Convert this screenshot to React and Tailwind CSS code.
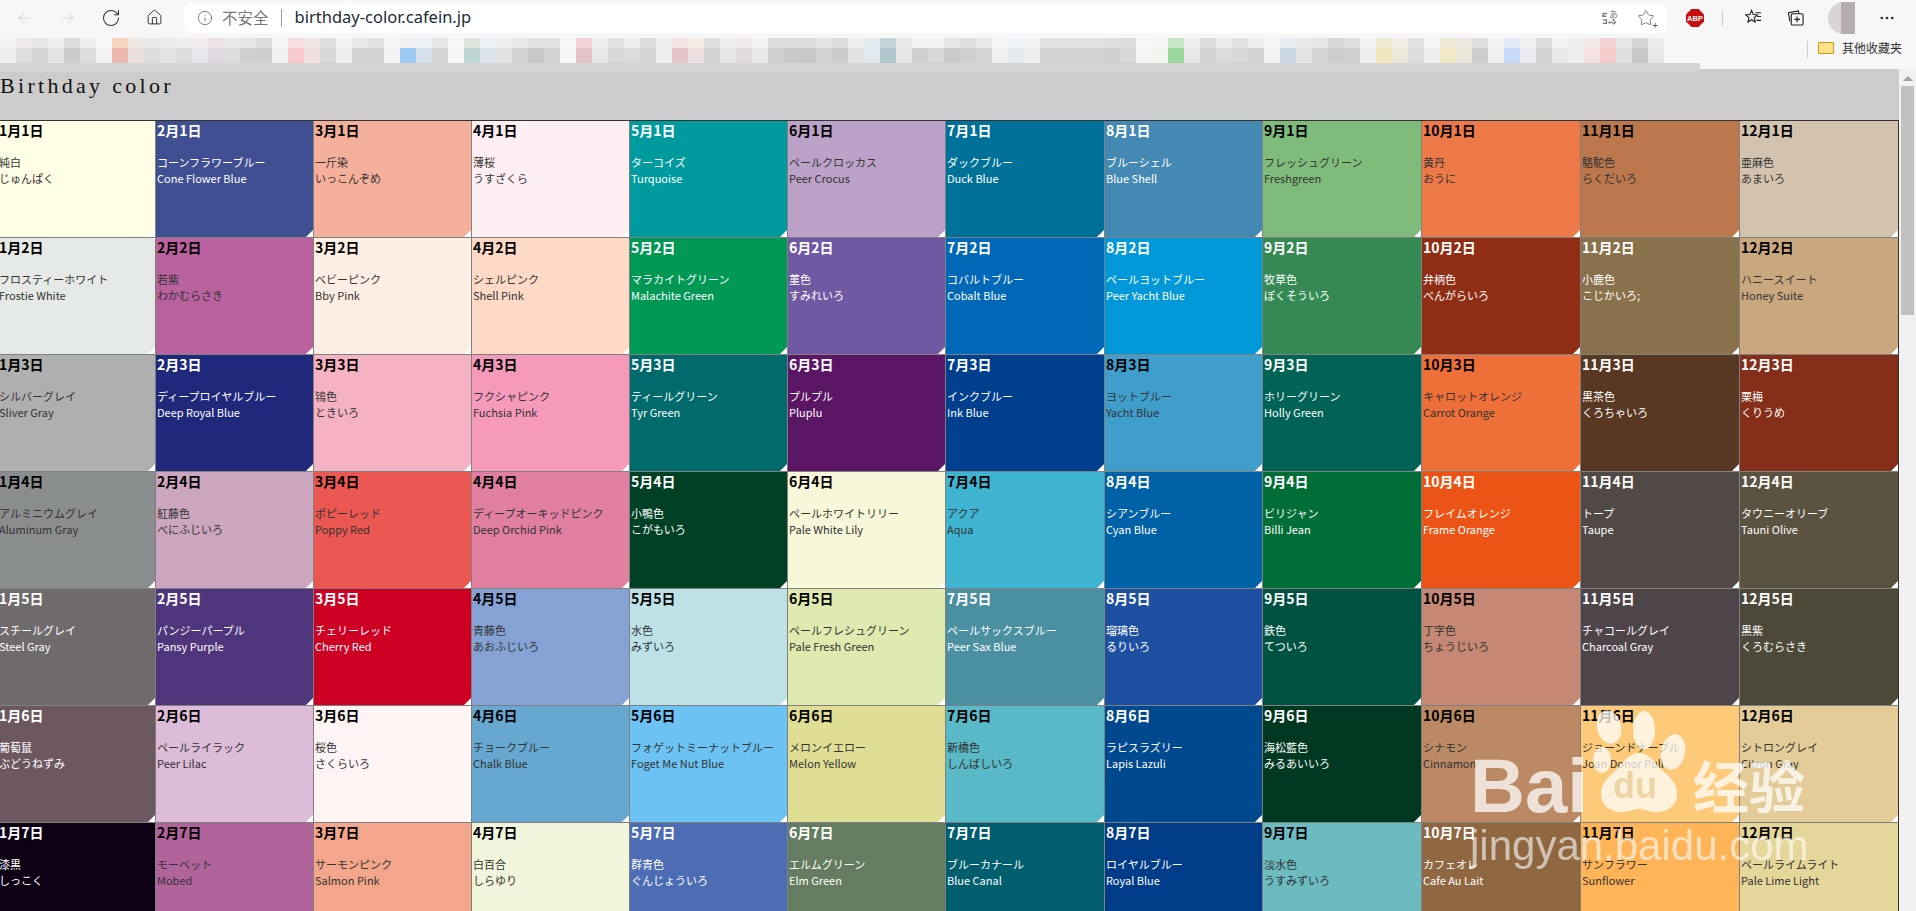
import React from 'react';
import { ArrowLeft, ArrowRight, RotateCw, Home, Info, Star, MoreHorizontal } from 'lucide-react';

const jp = "font-['Noto_Sans_CJK_JP',sans-serif]";

// one list per month: [name, second line, background, white text?]
const months = [
  [
    ['純白', 'じゅんぱく', 'bg-[#ffffe6]', false],
    ['フロスティーホワイト', 'Frostie White', 'bg-[#e6eae6]', false],
    ['シルバーグレイ', 'Sliver Gray', 'bg-[#afafb0]', false],
    ['アルミニウムグレイ', 'Aluminum Gray', 'bg-[#8a8d8d]', false],
    ['スチールグレイ', 'Steel Gray', 'bg-[#6f6a6c]', true],
    ['葡萄鼠', 'ぶどうねずみ', 'bg-[#6d5860]', true],
    ['漆黒', 'しっこく', 'bg-[#0d0015]', true],
  ],
  [
    ['コーンフラワーブルー', 'Cone Flower Blue', 'bg-[#3f4f91]', true],
    ['若紫', 'わかむらさき', 'bg-[#b9629f]', false],
    ['ディープロイヤルブルー', 'Deep Royal Blue', 'bg-[#20287c]', true],
    ['紅藤色', 'べにふじいろ', 'bg-[#cca6bf]', false],
    ['パンジーパープル', 'Pansy Purple', 'bg-[#4f357c]', true],
    ['ペールライラック', 'Peer Lilac', 'bg-[#dcbcd8]', false],
    ['モーベット', 'Mobed', 'bg-[#b0649b]', false],
  ],
  [
    ['一斤染', 'いっこんぞめ', 'bg-[#f5b09b]', false],
    ['ベビーピンク', 'Bby Pink', 'bg-[#fdeee4]', false],
    ['鴇色', 'ときいろ', 'bg-[#f5b2c2]', false],
    ['ポピーレッド', 'Poppy Red', 'bg-[#eb5751]', false],
    ['チェリーレッド', 'Cherry Red', 'bg-[#cd0024]', true],
    ['桜色', 'さくらいろ', 'bg-[#fef4f3]', false],
    ['サーモンピンク', 'Salmon Pink', 'bg-[#f3a68c]', false],
  ],
  [
    ['薄桜', 'うすざくら', 'bg-[#fdeef2]', false],
    ['シェルピンク', 'Shell Pink', 'bg-[#fdd9c6]', false],
    ['フクシャピンク', 'Fuchsia Pink', 'bg-[#f59aba]', false],
    ['ディープオーキッドピンク', 'Deep Orchid Pink', 'bg-[#e07fa0]', false],
    ['青藤色', 'あおふじいろ', 'bg-[#84a2d4]', false],
    ['チョークブルー', 'Chalk Blue', 'bg-[#66a8cf]', false],
    ['白百合', 'しらゆり', 'bg-[#f1f5dc]', false],
  ],
  [
    ['ターコイズ', 'Turquoise', 'bg-[#009b9f]', true],
    ['マラカイトグリーン', 'Malachite Green', 'bg-[#009854]', true],
    ['ティールグリーン', 'Tyr Green', 'bg-[#006a6c]', true],
    ['小鴨色', 'こがもいろ', 'bg-[#004025]', true],
    ['水色', 'みずいろ', 'bg-[#bce2e8]', false],
    ['フォゲットミーナットブルー', 'Foget Me Nut Blue', 'bg-[#6cc3f3]', false],
    ['群青色', 'ぐんじょういろ', 'bg-[#4c6cb3]', true],
  ],
  [
    ['ペールクロッカス', 'Peer Crocus', 'bg-[#bca1c9]', false],
    ['菫色', 'すみれいろ', 'bg-[#7058a3]', true],
    ['プルプル', 'Pluplu', 'bg-[#5a1665]', true],
    ['ペールホワイトリリー', 'Pale White Lily', 'bg-[#f7f7d9]', false],
    ['ペールフレシュグリーン', 'Pale Fresh Green', 'bg-[#deeab0]', false],
    ['メロンイエロー', 'Melon Yellow', 'bg-[#e0de94]', false],
    ['エルムグリーン', 'Elm Green', 'bg-[#647c5f]', true],
  ],
  [
    ['ダックブルー', 'Duck Blue', 'bg-[#007199]', true],
    ['コバルトブルー', 'Cobalt Blue', 'bg-[#0068b7]', true],
    ['インクブルー', 'Ink Blue', 'bg-[#003f8e]', true],
    ['アクア', 'Aqua', 'bg-[#3eb4d1]', false],
    ['ペールサックスブルー', 'Peer Sax Blue', 'bg-[#4a90a0]', true],
    ['新橋色', 'しんばしいろ', 'bg-[#59b9c6]', false],
    ['ブルーカナール', 'Blue Canal', 'bg-[#005e6e]', true],
  ],
  [
    ['ブルーシェル', 'Blue Shell', 'bg-[#4389b4]', true],
    ['ペールヨットブルー', 'Peer Yacht Blue', 'bg-[#0098d8]', true],
    ['ヨットブルー', 'Yacht Blue', 'bg-[#409ecc]', false],
    ['シアンブルー', 'Cyan Blue', 'bg-[#0062a6]', true],
    ['瑠璃色', 'るりいろ', 'bg-[#1e50a2]', true],
    ['ラピスラズリー', 'Lapis Lazuli', 'bg-[#00498f]', true],
    ['ロイヤルブルー', 'Royal Blue', 'bg-[#003c88]', true],
  ],
  [
    ['フレッシュグリーン', 'Freshgreen', 'bg-[#7fbc7c]', false],
    ['牧草色', 'ぼくそういろ', 'bg-[#358a54]', true],
    ['ホリーグリーン', 'Holly Green', 'bg-[#006355]', true],
    ['ビリジャン', 'Billi Jean', 'bg-[#006e36]', true],
    ['鉄色', 'てついろ', 'bg-[#005243]', true],
    ['海松藍色', 'みるあいいろ', 'bg-[#003822]', true],
    ['淡水色', 'うすみずいろ', 'bg-[#6cbbc1]', false],
  ],
  [
    ['黄丹', 'おうに', 'bg-[#ee7948]', false],
    ['弁柄色', 'べんがらいろ', 'bg-[#8f2e14]', true],
    ['キャロットオレンジ', 'Carrot Orange', 'bg-[#ee6f37]', false],
    ['フレイムオレンジ', 'Frame Orange', 'bg-[#ec5415]', true],
    ['丁字色', 'ちょうじいろ', 'bg-[#c48874]', false],
    ['シナモン', 'Cinnamon', 'bg-[#bb8a64]', false],
    ['カフェオレ', 'Cafe Au Lait', 'bg-[#8f6842]', true],
  ],
  [
    ['駱駝色', 'らくだいろ', 'bg-[#bc774d]', false],
    ['小鹿色', 'こじかいろ;', 'bg-[#89714b]', true],
    ['黒茶色', 'くろちゃいろ', 'bg-[#583822]', true],
    ['トープ', 'Taupe', 'bg-[#504946]', true],
    ['チャコールグレイ', 'Charcoal Gray', 'bg-[#4e454a]', true],
    ['ジョーンドナープル', 'Joan Donor Pull', 'bg-[#fdca79]', false],
    ['サンフラワー', 'Sunflower', 'bg-[#ffb458]', false],
  ],
  [
    ['亜麻色', 'あまいろ', 'bg-[#d3c3ae]', false],
    ['ハニースイート', 'Honey Suite', 'bg-[#c9a880]', false],
    ['栗梅', 'くりうめ', 'bg-[#852e19]', true],
    ['タウニーオリーブ', 'Tauni Olive', 'bg-[#5b5240]', true],
    ['黒紫', 'くろむらさき', 'bg-[#4d4938]', true],
    ['シトロングレイ', 'Citron Gray', 'bg-[#e3cc98]', false],
    ['ペールライムライト', 'Pale Lime Light', 'bg-[#e5d69a]', false],
  ],
];

// blurred bookmark bar: top and bottom half of each mosaic block
const mosaic = [
  ['bg-[#f4f4f4]', 'bg-[#efefef]'], ['bg-[#f0e8ea]', 'bg-[#e0dde0]'], ['bg-[#e6e6e6]', 'bg-[#d6d6d6]'], ['bg-[#eeeeee]', 'bg-[#e4e4e4]'],
  ['bg-[#dddddd]', 'bg-[#cbcbcb]'], ['bg-[#eeeeee]', 'bg-[#dddddd]'], ['bg-[#f7f7f7]', 'bg-[#f2f2f2]'], ['bg-[#f5d5c0]', 'bg-[#ecb8ae]'],
  ['bg-[#f0e8e4]', 'bg-[#eadfdc]'], ['bg-[#e9e9e9]', 'bg-[#dddddd]'], ['bg-[#ececec]', 'bg-[#e3e3e3]'], ['bg-[#eeeeee]', 'bg-[#dddddd]'],
  ['bg-[#f3ecec]', 'bg-[#e8e6ec]'], ['bg-[#efe2e6]', 'bg-[#dfd9e0]'], ['bg-[#e9e9e9]', 'bg-[#dddddd]'], ['bg-[#e6e6e6]', 'bg-[#cfcfcf]'],
  ['bg-[#dddddd]', 'bg-[#cecece]'], ['bg-[#f5f5f5]', 'bg-[#f1f1f1]'], ['bg-[#f7dfe0]', 'bg-[#f7c8cc]'], ['bg-[#f3e6e6]', 'bg-[#f0e0e0]'],
  ['bg-[#e0e0e0]', 'bg-[#d8d8d8]'], ['bg-[#f2f2f2]', 'bg-[#eeeeee]'], ['bg-[#e8e8e8]', 'bg-[#d2d2d2]'], ['bg-[#e2e2e2]', 'bg-[#d2d2d2]'],
  ['bg-[#f5f5f5]', 'bg-[#f3f3f3]'], ['bg-[#f0f0f0]', 'bg-[#9ccaf3]'], ['bg-[#eef1f4]', 'bg-[#d6e1ec]'], ['bg-[#e6e6e6]', 'bg-[#d6d6d6]'],
  ['bg-[#f7f7f7]', 'bg-[#f6f6f6]'], ['bg-[#dce6dc]', 'bg-[#bed6d3]'], ['bg-[#eef2f5]', 'bg-[#dbe4ec]'], ['bg-[#eeeeee]', 'bg-[#e2e2e2]'],
  ['bg-[#e8e8e8]', 'bg-[#d2d2d2]'], ['bg-[#e2e2e2]', 'bg-[#c8c8c8]'], ['bg-[#e2e2e2]', 'bg-[#d2d2d2]'], ['bg-[#f7f7f7]', 'bg-[#f6f6f6]'],
  ['bg-[#f2d4d6]', 'bg-[#e3c1c4]'], ['bg-[#efefef]', 'bg-[#e8e8e8]'], ['bg-[#e2e2e2]', 'bg-[#d8d8d8]'], ['bg-[#eeeeee]', 'bg-[#dcdcdc]'],
  ['bg-[#dddddd]', 'bg-[#d6d6d6]'], ['bg-[#eeeeee]', 'bg-[#eeeeee]'], ['bg-[#f3e4e4]', 'bg-[#e4c4c8]'], ['bg-[#f5ece2]', 'bg-[#efdfe0]'],
  ['bg-[#e0e0e0]', 'bg-[#d2d2d2]'], ['bg-[#efefef]', 'bg-[#e6e6e6]'], ['bg-[#efeaeb]', 'bg-[#e0dbdc]'], ['bg-[#f2f2f2]', 'bg-[#e9e9e9]'],
  ['bg-[#dcdcdc]', 'bg-[#d0d0d0]'], ['bg-[#dddddd]', 'bg-[#c9c9c9]'], ['bg-[#dddddd]', 'bg-[#c8c8c8]'], ['bg-[#e3e3e3]', 'bg-[#d2d2d2]'],
  ['bg-[#dddddd]', 'bg-[#cbcbcb]'], ['bg-[#eeeeee]', 'bg-[#e2e2e2]'], ['bg-[#e3ecf0]', 'bg-[#e0e9ef]'], ['bg-[#c2d4da]', 'bg-[#aec6cc]'],
  ['bg-[#e8e8e8]', 'bg-[#e6e6e6]'], ['bg-[#f3f3f3]', 'bg-[#cfcfcf]'], ['bg-[#f3f3f3]', 'bg-[#d8d8d8]'], ['bg-[#e6e6e6]', 'bg-[#cacaca]'],
  ['bg-[#e0e0e0]', 'bg-[#cfcfcf]'], ['bg-[#e8e8e8]', 'bg-[#d6d6d6]'], ['bg-[#f5f5f5]', 'bg-[#f0f0f0]'], ['bg-[#f1f5f7]', 'bg-[#e4ecef]'],
  ['bg-[#f2f2f2]', 'bg-[#efefef]'], ['bg-[#e2e2e2]', 'bg-[#d2d2d2]'], ['bg-[#e2e2e2]', 'bg-[#d2d2d2]'], ['bg-[#e2e2e2]', 'bg-[#d2d2d2]'],
  ['bg-[#e2e2e2]', 'bg-[#d2d2d2]'], ['bg-[#e0e0e0]', 'bg-[#d0d0d0]'], ['bg-[#dddddd]', 'bg-[#d8d8d8]'],
  ['bg-[#f7f7f7]', 'bg-[#f5f5f5]'], ['bg-[#f6f7f4]', 'bg-[#f3f5f1]'], ['bg-[#c6e6c6]', 'bg-[#9bd89a]'], ['bg-[#eeeeee]', 'bg-[#e8e8e8]'],
  ['bg-[#dddddd]', 'bg-[#d2d2d2]'], ['bg-[#ececec]', 'bg-[#dcdcdc]'], ['bg-[#e2e2e2]', 'bg-[#d8d8d8]'], ['bg-[#efefef]', 'bg-[#d2d2d2]'], ['bg-[#f5f5f5]', 'bg-[#f2f2f2]'],
  ['bg-[#e6ecf2]', 'bg-[#c9d6e4]'], ['bg-[#eaeaea]', 'bg-[#e4e4e4]'], ['bg-[#e6e6e6]', 'bg-[#d4d4d4]'], ['bg-[#d8d8d8]', 'bg-[#cdcdcd]'],
  ['bg-[#e0e0e0]', 'bg-[#d0d0d0]'], ['bg-[#f2f2f2]', 'bg-[#eeeeee]'], ['bg-[#f0e8d0]', 'bg-[#f2e6bf]'], ['bg-[#f0ede4]', 'bg-[#ece9da]'],
  ['bg-[#e2e2e2]', 'bg-[#dddddd]'], ['bg-[#f5f5f5]', 'bg-[#eeeeee]'], ['bg-[#f0e9d2]', 'bg-[#f2e8c4]'], ['bg-[#eee9e0]', 'bg-[#eae7d9]'],
  ['bg-[#e0e0e0]', 'bg-[#cdcdcd]'], ['bg-[#f3f3f3]', 'bg-[#f0f0f0]'], ['bg-[#e2ebf7]', 'bg-[#c6daf7]'], ['bg-[#f1f1f1]', 'bg-[#e9ebf0]'],
  ['bg-[#dddddd]', 'bg-[#d2d2d2]'], ['bg-[#f3f3f3]', 'bg-[#e9e9e9]'], ['bg-[#eeeeee]', 'bg-[#eeeeee]'], ['bg-[#f5e8e8]', 'bg-[#f5e0e2]'],
  ['bg-[#f3d4d4]', 'bg-[#f5caca]'], ['bg-[#e6e6e6]', 'bg-[#e0e0e0]'], ['bg-[#d6d6d6]', 'bg-[#c8c8c8]'], ['bg-[#ececec]', 'bg-[#e8e8e8]'],
];

function Cell({ month, day, name, sub, bg, light, last }) {
  return (
    <div className={`relative h-[117px] overflow-hidden border-r border-b border-b-[#808080] pl-px pt-px ${last ? 'border-r-[#333]' : 'border-r-[#808080]'} ${bg} ${jp}`}>
      <div className={`text-[14px] leading-4 font-bold whitespace-nowrap ${light ? 'text-white' : 'text-black'}`}>
        {month}月{day}日
      </div>
      <div className={`mt-4 text-[11px] leading-4 whitespace-nowrap ${light ? 'text-white' : 'text-[#333]'}`}>
        <div>{name}</div>
        <div>{sub}</div>
      </div>
      <div className="absolute bottom-0 right-0 size-[7px] bg-white [clip-path:polygon(100%_0,100%_100%,0_100%)]" />
    </div>
  );
}

function Toolbar() {
  return (
    <div className="flex h-[35px] items-center bg-[#f7f7f7]">
      <div className="flex w-[184px] items-center pl-[15px]">
        <ArrowLeft className="size-[18px] text-[#cfcfcf]" strokeWidth={1.25} />
        <ArrowRight className="ml-[26px] size-[18px] text-[#cfcfcf]" strokeWidth={1.25} />
        <RotateCw className="ml-[24px] size-[20px] text-[#333]" strokeWidth={1.25} />
        <Home className="ml-[25px] size-[17px] text-[#222]" strokeWidth={1.25} />
      </div>
      <div className="flex h-[30px] w-[1483px] items-center rounded-lg bg-white">
        <Info className="ml-[13px] size-4 text-[#666]" strokeWidth={1.25} />
        <span className="ml-[9px] font-['Noto_Sans_CJK_SC',sans-serif] text-[15.5px] text-[#777]">不安全</span>
        <span className="ml-[12px] h-[18px] w-px bg-[#999]" />
        <span className="ml-[13px] font-['Noto_Sans',sans-serif] text-[16.5px] text-[#1c2b3a]">birthday-color.cafein.jp</span>
        <div className="ml-auto flex items-center gap-[18px] pr-[12px]">
          <svg viewBox="0 0 20 20" className="size-[18px]" fill="none" stroke="#777" strokeWidth="1.5">
            <path d="M2 5h5M2 5v3h4M2 12h4v4H2M8 15h5M13 11l3 4-3 2" />
            <text x="9" y="10" fontSize="10" fill="#777" stroke="none" fontFamily="Noto Sans CJK JP">あ</text>
          </svg>
          <div className="relative">
            <Star className="size-[18px] text-[#777]" strokeWidth={1.25} />
            <span className="absolute -bottom-[3px] -right-[3px] text-[10px] leading-none text-[#555]">+</span>
          </div>
        </div>
      </div>
      <div className="flex flex-1 items-center">
        <svg viewBox="0 0 18 18" className="ml-[19px] size-[18px]">
          <path d="M5.5 0h7L18 5.5v7L12.5 18h-7L0 12.5v-7z" fill="#c70d0d" />
          <text x="9" y="12" textAnchor="middle" fontSize="7.5" fontWeight="700" fill="#fff" fontFamily="Liberation Sans">ABP</text>
        </svg>
        <span className="ml-[18px] h-[16px] w-px bg-[#ccc]" />
        <svg viewBox="0 0 18 18" className="ml-[22px] size-[17px]" fill="none" stroke="#222" strokeWidth="1.2">
          <path d="M7 1.5l1.8 4.4 4.4.3-3.4 3 1 4.6L7 11.4l-3.8 2.4 1-4.6-3.4-3 4.4-.3z" />
          <path d="M11 4h6M13 8h4M12 12h5" />
        </svg>
        <svg viewBox="0 0 18 18" className="ml-[25px] size-[17px]" fill="none" stroke="#222" strokeWidth="1.2">
          <path d="M3 13L1.5 4 12 2l.6 2.5" />
          <rect x="4.5" y="5" width="12.5" height="12" rx="1.5" />
          <path d="M10.7 8v6M7.7 11h6" />
        </svg>
        <div className="ml-[24px] flex h-[32px] w-[27px] overflow-hidden rounded-l-full">
          <div className="w-[13px] bg-[#d9d5d5]" />
          <div className="w-[14px] bg-[#b5adb2]" />
        </div>
        <MoreHorizontal className="ml-[23px] size-[18px] text-[#222]" strokeWidth={1.5} />
      </div>
    </div>
  );
}

function BookmarkBar() {
  return (
    <div className="relative flex h-[34px] items-start bg-[#f7f7f7] pt-[3px]">
      <div className="flex w-[1664px] shrink-0">
        {mosaic.map(([top, bottom], i) => (
          <div key={i} className="w-4">
            <div className={`h-[10px] ${top}`} />
            <div className={`h-[15px] ${bottom}`} />
          </div>
        ))}
      </div>
      <div className="ml-[143px] mt-[3px] h-[17px] w-px bg-[#ccc]" />
      <div className="ml-[10px] mt-[4px] h-[12px] w-[16px] rounded-[1px] border border-[#c29a1c] bg-[#fde08a]" />
      <span className="ml-[8px] mt-[1px] font-['Noto_Sans_CJK_SC',sans-serif] text-[12px] leading-[18px] text-[#333]">其他收藏夹</span>
    </div>
  );
}

function Scrollbar() {
  return (
    <div className="flex w-[17px] shrink-0 flex-col items-center bg-[#f1f1f1]">
      <div className="mt-[7px] h-0 w-0 border-x-[5px] border-b-[5px] border-x-transparent border-b-[#a3a3a3]" />
      <div className="mt-[5px] h-[229px] w-[13px] bg-[#c1c1c1]" />
    </div>
  );
}

function Watermark() {
  return (
    <div className="pointer-events-none absolute left-[1470px] top-[700px] h-[170px] w-[345px] text-white/75 blur-[0.6px]">
      <span className="absolute left-0 top-[42px] font-['Liberation_Sans',sans-serif] text-[76px] leading-[88px] font-bold">Bai</span>
      <svg viewBox="0 0 94 106" className="absolute left-[122px] top-[6px] h-[106px] w-[94px]" fill="currentColor">
        <ellipse cx="17" cy="21" rx="12" ry="17" transform="rotate(-14 17 21)" />
        <ellipse cx="52" cy="24" rx="11" ry="19" />
        <ellipse cx="81" cy="46" rx="12" ry="18" transform="rotate(12 81 46)" />
        <ellipse cx="10" cy="54" rx="9" ry="13" />
        <path d="M47 47c10 0 14 8 21 15 8 8 17 13 17 26 0 12-10 18-21 18-7 0-11-3-17-3s-10 3-17 3c-12 0-21-7-21-18 0-12 9-18 17-26 7-7 11-15 21-15z" />
      </svg>
      <span className="absolute left-[143px] top-[66px] font-['Liberation_Sans',sans-serif] text-[36px] leading-[40px] font-bold text-[#e0c080]/60">du</span>
      <span className="absolute left-[223px] top-[44px] font-['Noto_Sans_CJK_SC',sans-serif] text-[56px] leading-[80px] font-bold whitespace-nowrap">经验</span>
      <span className="absolute left-0 top-[122px] font-['Liberation_Sans',sans-serif] text-[42px] leading-[48px] whitespace-nowrap text-white/60">jingyan.baidu.com</span>
    </div>
  );
}

export default function App() {
  const rows = [0, 1, 2, 3, 4, 5, 6];
  return (
    <div className="relative flex h-[911px] w-[1916px] flex-col overflow-hidden bg-[#cccccc]">
      <Toolbar />
      <BookmarkBar />
      <div className="absolute left-0 top-[63px] h-[9px] w-[1700px] bg-[#d4d4d4]" />
      <div className="flex min-h-0 flex-1">
        <div className="min-w-0 flex-1 overflow-hidden">
          <h1 className="h-[51px] pt-[2px] font-['Liberation_Serif',serif] text-[22px] leading-[30px] font-normal tracking-[3.3px] text-[#111]">
            Birthday color
          </h1>
          <div className="-ml-[2px] grid w-[1901px] grid-cols-[158px_158px_158px_158px_158px_158px_159px_158px_159px_159px_159px_159px] border-t border-[#333]">
            {rows.map((r) =>
              months.map((m, i) => (
                <Cell
                  key={`${i}-${r}`}
                  month={i + 1}
                  day={r + 1}
                  name={m[r][0]}
                  sub={m[r][1]}
                  bg={m[r][2]}
                  light={m[r][3]}
                  last={i === 11}
                />
              ))
            )}
          </div>
        </div>
        <Scrollbar />
      </div>
      <Watermark />
    </div>
  );
}
